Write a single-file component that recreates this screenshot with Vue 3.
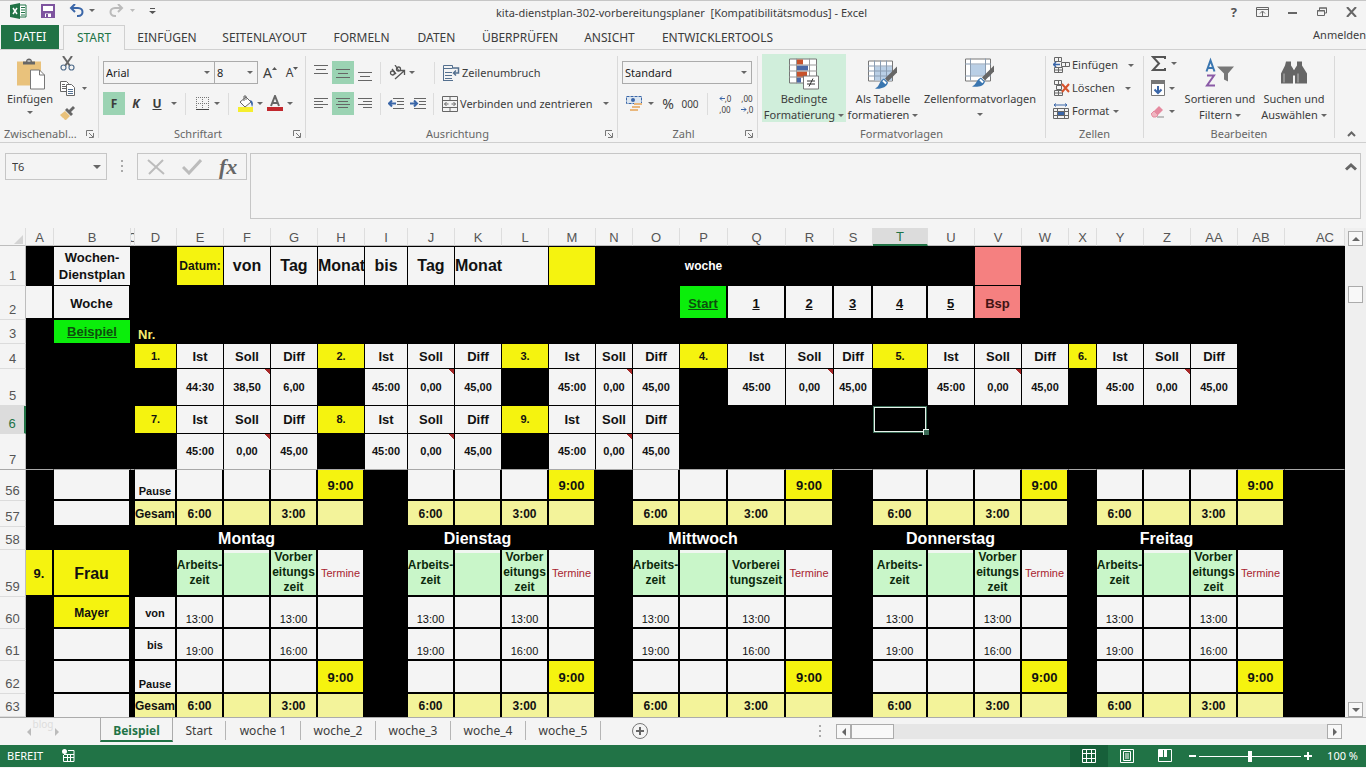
<script setup>
import { ref } from 'vue'

const ribbonTabs = [
  { t: 'EINFÜGEN', w: 84 }, { t: 'SEITENLAYOUT', w: 111 }, { t: 'FORMELN', w: 83 }, { t: 'DATEN', w: 67 },
  { t: 'ÜBERPRÜFEN', w: 100 }, { t: 'ANSICHT', w: 79 }, { t: 'ENTWICKLERTOOLS', w: 137 }
]
const sheets = ['Start', 'woche 1', 'woche_2', 'woche_3', 'woche_4', 'woche_5']
const zoom = ref(50)

const cols = [
  ['A', 28], ['B', 77], ['C', 4], ['D', 42], ['E', 47], ['F', 47], ['G', 47], ['H', 47], ['I', 43],
  ['J', 47], ['K', 47], ['L', 47], ['M', 47], ['N', 37], ['O', 47], ['P', 48], ['Q', 58], ['R', 48],
  ['S', 39], ['T', 55], ['U', 47], ['V', 47], ['W', 47], ['X', 28], ['Y', 47], ['Z', 47], ['AA', 47],
  ['AB', 47], ['AC', 0]
]
const names = cols.map(c => c[0])
const days = [
  ['E', 'F', 'G', 'H'], ['J', 'K', 'L', 'M'], ['O', 'P', 'Q', 'R'], ['T', 'U', 'V', 'W'], ['Y', 'Z', 'AA', 'AB']
]
const dayNames = ['Montag', 'Dienstag', 'Mittwoch', 'Donnerstag', 'Freitag']

function c(t, k) { return { t, k } }

function summaryHead(first, count) {
  const out = {}
  for (let i = 0; i < count; i++) {
    const at = 3 + i * 4
    out[names[at]] = c(first + i + '.', 'yellow s11')
    out[names[at + 1]] = c('Ist', 'white s13')
    out[names[at + 2]] = c('Soll', 'white s13')
    out[names[at + 3]] = c('Diff', 'white s13')
  }
  return out
}
function summaryValues(list) {
  const out = {}
  list.forEach((v, i) => {
    const at = 3 + i * 4
    out[names[at + 1]] = c(v[0], 'white s11')
    out[names[at + 2]] = c(v[1], 'white s11 note')
    out[names[at + 3]] = c(v[2], 'white s11')
  })
  return out
}
function dayCells(base, vals) {
  const out = { ...base }
  days.forEach(d => d.forEach((n, i) => { if (vals[i]) out[n] = vals[i] }))
  return out
}
const e = c('', 'white')
const std = ['45:00', '0,00', '45,00']
const pause = () => dayCells({ B: e, D: c('Pause', 'white s11 low') }, [e, e, e, c('9:00', 'yellow s13')])
const total = () => dayCells({ B: e, D: c('Gesamt', 'pale s12 left') },
  [c('6:00', 'pale s12'), c('', 'pale'), c('3:00', 'pale s12'), c('', 'pale')])

const dayTitles = {}
days.forEach((d, i) => { dayTitles[d[1]] = c(dayNames[i], 'dark s16') })
const headings = dayCells({ A: c('9.', 'yellow s13'), B: c('Frau', 'yellow s16') }, [
  c('Arbeits-\nzeit', 'mint s12'), c('', 'mint lit'), c('Vorber\neitungs\nzeit', 'mint s12'), c('Termine', 'white s11 red')
])
headings.Q = c('Vorberei\ntungszeit', 'mint s12')

const rows = [
  { n: 1, h: 40, k: 'thin first', cells: {
    B: c('Wochen-\nDienstplan', 'white s13 tall'), E: c('Datum:', 'yellow s12'), F: c('von', 'white s16'), G: c('Tag', 'white s16'),
    H: c('Monat', 'white s16 left'), I: c('bis', 'white s16'), J: c('Tag', 'white s16'),
    K: { t: 'Monat', k: 'white s16 left', span: 2 }, M: c('', 'yellow'), P: c('woche', 'dark s12'), V: c('', 'pink') } },
  { n: 2, h: 34, k: 'thick', cells: {
    A: e, B: c('Woche', 'white s13'), P: { t: 'Start', k: 'green s13', link: 1 },
    Q: { t: '1', k: 'white s13', link: 1 }, R: { t: '2', k: 'white s13', link: 1 }, S: { t: '3', k: 'white s13', link: 1 },
    T: { t: '4', k: 'white s13', link: 1 }, U: { t: '5', k: 'white s13', link: 1 }, V: c('Bsp', 'pink s13') } },
  { n: 3, h: 24, k: 'thin', cells: { B: { t: 'Beispiel', k: 'green s13', link: 1 }, D: c('Nr.', 'gold s13 left low') } },
  { n: 4, h: 25, k: 'thin', cells: summaryHead(1, 6) },
  { n: 5, h: 37, k: 'thin', cells: summaryValues([['44:30', '38,50', '6,00'], std, std, std, std, std]) },
  { n: 6, h: 28, k: 'thin current', cells: { ...summaryHead(7, 3), T: c('', 'selected') } },
  { n: 7, h: 36, k: 'thin frozen', cells: summaryValues([std, std, std]) },
  { n: 56, h: 31, k: 'thick', cells: pause() },
  { n: 57, h: 26, k: 'thick', cells: total() },
  { n: 58, h: 23, k: 'thick', cells: dayTitles },
  { n: 59, h: 47, k: 'thick', cells: headings },
  { n: 60, h: 32, k: 'thick', cells: dayCells({ B: c('Mayer', 'yellow s12'), D: c('von', 'white s11') },
    [c('13:00', 'white s11 low plain'), e, c('13:00', 'white s11 low plain'), e]) },
  { n: 61, h: 32, k: 'thick', cells: dayCells({ B: e, D: c('bis', 'white s11') },
    [c('19:00', 'white s11 low plain'), e, c('16:00', 'white s11 low plain'), e]) },
  { n: 62, h: 33, k: 'thick', cells: pause() },
  { n: 63, h: 23, k: 'thick last', cells: total() }
]
function cellList(row) {
  const out = []
  for (let i = 0; i < names.length; i++) {
    const cell = row.cells[names[i]] || { t: '', k: '' }
    out.push({ id: names[i], ...cell })
    if (cell.span) i += cell.span - 1
  }
  return out
}
</script>

<template>
  <div class="app">
    <header class="titlebar">
      <div class="quick">
        <svg width="17" height="16" viewBox="0 0 17 16"><path d="M9 2h7v12H9z" fill="#fff" stroke="#217346" /><path d="M11 4.500h4M11 7h4M11 9.500h4M11 12h4" stroke="#217346" /><path d="M0 2l10-2v16L0 14z" fill="#217346" /><path d="M3 5l4 6M7 5l-4 6" stroke="#fff" stroke-width="1.500" /></svg>
        <button class="ic" aria-label="Speichern"><svg width="14" height="14" viewBox="0 0 14 14"><path d="M1 1h12v12H1z" fill="#fff" stroke="#7e549f" stroke-width="2" /><path d="M1 7h12v6H1z" fill="#7e549f" /><path d="M4 9.500h6V13H4z" fill="#fff" /><path d="M5 10h2v3H5z" fill="#7e549f" /></svg></button>
        <button class="ic" aria-label="Rückgängig"><svg width="26" height="14" viewBox="0 0 26 14"><path d="M6 0L2 4l4 4M2 4h7c6 0 6 8 0 8H8" fill="none" stroke="#3a66a8" stroke-width="2" /><path d="M20 5h6l-3 3z" fill="#666" /></svg></button>
        <button class="ic" aria-label="Wiederholen"><svg width="26" height="14" viewBox="0 0 26 14"><path d="M9 0l4 4-4 4M13 4H6C0 4 0 12 6 12h1" fill="none" stroke="#bbb" stroke-width="2" /><path d="M21 5h5l-2.500 3z" fill="#bbb" /></svg></button>
        <button class="ic" aria-label="Symbolleiste anpassen"><svg width="7" height="8" viewBox="0 0 7 8"><path d="M1 1.500h5" stroke="#555" /><path d="M0 4h7L3.500 7z" fill="#555" /></svg></button>
      </div>
      <h1 class="title">kita-dienstplan-302-vorbereitungsplaner&nbsp; [Kompatibilitätsmodus] - Excel</h1>
      <div class="window">
        <button class="ic help" aria-label="Hilfe">?</button>
        <button class="ic" aria-label="Menüband-Anzeigeoptionen"><svg width="13" height="10" viewBox="0 0 13 10"><path d="M.5.5h12v9H.5zM.5 2.500h12" fill="none" stroke="#666" /><path d="M6.500 9V4.500M4 6.500l2.500-2.500L9 6.500" fill="none" stroke="#666" /></svg></button>
        <button class="ic" aria-label="Minimieren"><svg width="10" height="10" viewBox="0 0 10 10"><path d="M0 6h9" stroke="#666" stroke-width="2" /></svg></button>
        <button class="ic" aria-label="Verkleinern"><svg width="10" height="10" viewBox="0 0 10 10"><path d="M2.500 3V1h7v5H8M.5 3.500h7v5h-7z" fill="none" stroke="#666" /><path d="M2 1h8M0 4h8" stroke="#666" /></svg></button>
        <button class="ic" aria-label="Schließen"><svg width="11" height="10" viewBox="0 0 11 10"><path d="M1 0l9 10M10 0L1 10" stroke="#666" stroke-width="2" /></svg></button>
      </div>
    </header>

    <nav class="tabs">
      <button class="file">DATEI</button>
      <button class="tab on">START</button>
      <button v-for="t in ribbonTabs" :key="t.t" class="tab" :style="{ width: t.w + 'px' }">{{ t.t }}</button>
      <a href="#" class="login">Anmelden</a>
    </nav>

    <section class="ribbon">
      <div class="group g1">
        <div class="body">
          <button class="big paste">
            <svg width="29" height="31" viewBox="0 0 29 31"><path d="M1 3h24v24H1z" fill="#e9c27c" /><path d="M7 6V3h3c0-4 6-4 6 0h3v3z" fill="#666" /><path d="M11.500 2.500h3" stroke="#fff" /><path d="M14.500 11.500h9l5 5v14h-14z" fill="#fff" stroke="#777" /><path d="M23.500 11.500v5h5" fill="none" stroke="#777" /></svg>
            <span>Einfügen</span><i class="car"></i>
          </button>
          <div class="stack clip">
            <button class="ic" aria-label="Ausschneiden"><svg width="15" height="15" viewBox="0 0 15 15"><path d="M3 0l7 10M12 0L5 10" stroke="#666" stroke-width="2" /><circle cx="3.500" cy="11.500" r="2.500" fill="none" stroke="#54708f" stroke-width="1.200" /><circle cx="11.500" cy="11.500" r="2.500" fill="none" stroke="#54708f" stroke-width="1.200" /></svg></button>
            <button class="ic" aria-label="Kopieren"><svg width="27" height="15" viewBox="0 0 27 15"><path d="M.5.5h6l2 2v8h-8zM2 3.500h3M2 5.500h4M2 7.500h4" fill="#fff" stroke="#666" /><path d="M6.500 3.500h5l3 3v8h-8z" fill="#fff" stroke="#666" /><path d="M8 8.500h5M8 10.500h5M8 12.500h5" stroke="#54708f" /><path d="M22 6h5l-2.500 3z" fill="#666" /></svg></button>
            <button class="ic" aria-label="Format übertragen"><svg width="16" height="14" viewBox="0 0 16 14"><path d="M0 9l5-4 5 5-4 4c-2 0-2-2-3-2z" fill="#e9c27c" /><path d="M5 4l6 6 2-2-2-2 4-4-2-2-4 4-2-2z" fill="#666" /></svg></button>
          </div>
        </div>
        <div class="cap"><span>Zwischenabl...</span><svg class="dlg" width="8" height="8" viewBox="0 0 8 8"><path d="M.5 6V.5H7M3 3l4 4M7.500 3v4.500H3" fill="none" stroke="#777" /></svg></div>
      </div>

      <div class="group g2">
        <div class="lines">
          <div class="line">
            <label class="combo arial"><select aria-label="Schriftart"><option>Arial</option></select></label>
            <label class="combo size"><select aria-label="Schriftgrad"><option>8</option></select></label>
            <button class="ic w24" aria-label="Schrift vergrößern"><b class="grow">A</b><svg width="5" height="12" viewBox="0 0 5 12"><path d="M0 3l2.500-3L5 3z" fill="#555" /></svg></button>
            <button class="ic w20" aria-label="Schrift verkleinern"><b class="shrink">A</b><svg width="5" height="12" viewBox="0 0 5 12"><path d="M0 0h5L2.500 3z" fill="#555" /></svg></button>
          </div>
          <div class="line">
            <button class="ic w22 on bold">F</button>
            <button class="ic w22 bold ital">K</button>
            <button class="ic w20 bold und">U</button><i class="car"></i>
            <i class="vs"></i>
            <button class="ic w24" aria-label="Rahmen"><svg width="13" height="13" viewBox="0 0 13 13"><path d="M.5 0v12M6.500 0v12M12.500 0v12M0 .5h13M0 6.500h13" stroke="#777" stroke-dasharray="1 1" /><path d="M0 12.500h13" stroke="#444" /></svg></button><i class="car"></i>
            <i class="vs"></i>
            <button class="ic w24" aria-label="Füllfarbe"><svg width="17" height="17" viewBox="0 0 17 17"><path d="M1 12h15v5H1z" fill="#f5ee2e" /><path d="M3 7l6-5 5 5-6 5z" fill="#fff" stroke="#666" /><path d="M7 6V1h2v4" fill="none" stroke="#666" /><path d="M13 5c4 1 3 5 2 7z" fill="#3a66a8" /></svg></button><i class="car"></i>
            <button class="ic w24" aria-label="Schriftfarbe"><svg width="16" height="17" viewBox="0 0 16 17"><path d="M4 11l4-10 4 10M5.500 8h5" fill="none" stroke="#666" stroke-width="2" /><path d="M0 12h16v4H0z" fill="#c1272d" /></svg></button><i class="car"></i>
          </div>
        </div>
        <div class="cap"><span>Schriftart</span><svg class="dlg" width="8" height="8" viewBox="0 0 8 8"><path d="M.5 6V.5H7M3 3l4 4M7.500 3v4.500H3" fill="none" stroke="#777" /></svg></div>
      </div>

      <div class="group g3">
        <div class="lines">
          <div class="line">
            <button class="ic w22" aria-label="Oben ausrichten"><svg width="14" height="16" viewBox="0 0 14 16"><path d="M0 .5h14M2 4.500h10M0 8.500h14" stroke="#666" /></svg></button>
            <button class="ic w22 on" aria-label="Zentriert ausrichten"><svg width="14" height="16" viewBox="0 0 14 16"><path d="M0 4.500h14M2 8.500h10M0 12.500h14" stroke="#666" /></svg></button>
            <button class="ic w22" aria-label="Unten ausrichten"><svg width="14" height="16" viewBox="0 0 14 16"><path d="M0 7.500h14M2 11.500h10M0 15.500h14" stroke="#666" /></svg></button>
            <i class="vs"></i>
            <button class="ic w24" aria-label="Ausrichtung"><svg width="17" height="15" viewBox="0 0 17 15"><circle cx="3.500" cy="8" r="2" fill="none" stroke="#555" stroke-width="1.300" /><path d="M3 4l4 5M6 0l4 6" fill="none" stroke="#555" stroke-width="1.300" /><circle cx="9.500" cy="4" r="2" fill="none" stroke="#555" stroke-width="1.300" /><path d="M6 14l9-8M11 5.500h4.500V10" fill="none" stroke="#555" stroke-width="1.300" /></svg></button><i class="car"></i>
            <i class="vs wide"></i>
            <button class="txt"><svg width="17" height="16" viewBox="0 0 17 16"><path d="M.5.5h9v3h-9zM.5 3v12M2 7.500h7M2 10.500h7M2 13.500h7M0 15.500h10" fill="none" stroke="#54708f" /><path d="M10 3h5.500v5H11M13 5.500L10.500 8l2.500 2.500" fill="none" stroke="#54708f" stroke-width="1.500" /></svg>Zeilenumbruch</button>
          </div>
          <div class="line">
            <button class="ic w22" aria-label="Linksbündig"><svg width="14" height="13" viewBox="0 0 14 13"><path d="M0 1.500h14M0 4.500h9M0 7.500h14M0 10.500h9" stroke="#666" /></svg></button>
            <button class="ic w22 on" aria-label="Zentriert"><svg width="14" height="13" viewBox="0 0 14 13"><path d="M0 1.500h14M2 4.500h10M0 7.500h14M2 10.500h10" stroke="#666" /></svg></button>
            <button class="ic w22" aria-label="Rechtsbündig"><svg width="14" height="13" viewBox="0 0 14 13"><path d="M0 1.500h14M5 4.500h9M0 7.500h14M5 10.500h9" stroke="#666" /></svg></button>
            <i class="vs"></i>
            <button class="ic w22" aria-label="Einzug verkleinern"><svg width="16" height="12" viewBox="0 0 16 12"><path d="M5 .5h11M9 3.500h7M9 6.500h7M5 10.500h11" stroke="#666" /><path d="M1 5.500h7M4 2.500l-3 3 3 3" fill="none" stroke="#3a66a8" stroke-width="2" /></svg></button>
            <button class="ic w22" aria-label="Einzug vergrößern"><svg width="16" height="12" viewBox="0 0 16 12"><path d="M4 .5h12M9 3.500h7M9 6.500h7M4 10.500h12" stroke="#666" /><path d="M0 5.500h7M4 2.500l3 3-3 3" fill="none" stroke="#3a66a8" stroke-width="2" /></svg></button>
            <i class="vs"></i>
            <button class="txt"><svg width="16" height="16" viewBox="0 0 16 16"><path d="M.5.500h15v15H.5zM.5 4.500h15M.5 11.500h15M8 .5v4M8 11.500v4M2.500 8h4M13.500 8h-4M4.500 6l-2 2 2 2M11.500 6l2 2-2 2" fill="none" stroke="#666" /></svg>Verbinden und zentrieren</button><i class="car end"></i>
          </div>
        </div>
        <div class="cap"><span>Ausrichtung</span><svg class="dlg" width="8" height="8" viewBox="0 0 8 8"><path d="M.5 6V.5H7M3 3l4 4M7.500 3v4.500H3" fill="none" stroke="#777" /></svg></div>
      </div>

      <div class="group g4">
        <div class="lines">
          <div class="line"><label class="combo std"><select aria-label="Zahlenformat"><option>Standard</option></select></label></div>
          <div class="line">
            <button class="ic w24" aria-label="Buchhaltungszahlenformat"><svg width="17" height="16" viewBox="0 0 17 16"><path d="M.5.5h15v7H.5z" fill="#dce6f0" stroke="#3a66a8" stroke-dasharray="3 1" /><circle cx="7" cy="4" r="2" fill="#3a66a8" /><path d="M8 8h8M6 11h8M4 14h8" stroke="#e9b77c" stroke-width="2" /></svg></button><i class="car"></i>
            <button class="ic w22 pct">%</button>
            <button class="ic w22 zero">000</button>
            <i class="vs"></i>
            <button class="ic w22 deci" aria-label="Dezimalstelle hinzufügen"><span><svg width="6" height="5" viewBox="0 0 6 5"><path d="M1 2.500h5M3 .5l-2 2 2 2" fill="none" stroke="#3a66a8" /></svg>,0</span><span>,00</span></button>
            <button class="ic w22 deci" aria-label="Dezimalstelle entfernen"><span>,00</span><span><svg width="6" height="5" viewBox="0 0 6 5"><path d="M0 2.500h5M3 .5l2 2-2 2" fill="none" stroke="#3a66a8" /></svg>,0</span></button>
          </div>
        </div>
        <div class="cap"><span>Zahl</span><svg class="dlg" width="8" height="8" viewBox="0 0 8 8"><path d="M.5 6V.5H7M3 3l4 4M7.500 3v4.500H3" fill="none" stroke="#777" /></svg></div>
      </div>

      <div class="group g5">
        <div class="body">
          <button class="big lit84">
            <svg width="30" height="31" viewBox="0 0 30 31"><path d="M.5.5h27v24H.5z" fill="#fff" stroke="#777" /><path d="M8 1h6v5H8zM8 13h10v6H8z" fill="#c8532c" /><path d="M8 7h11v5H8zM8 19h4v5H8z" fill="#4a68a6" /><path d="M7.500 0v25M20.500 0v25M0 6.500h28M0 12.500h28M0 18.500h28" stroke="#999" /><path d="M14.500 17.500h15v13h-15z" fill="#fff" stroke="#777" /><path d="M18 22.500h8M18 25.500h8M24 20l-4 8" stroke="#333" /></svg>
            <span>Bedingte</span><span>Formatierung<i class="car"></i></span>
          </button>
          <button class="big table">
            <svg width="30" height="31" viewBox="0 0 30 31"><path d="M.5 2.500h24v20H.5z" fill="#fff" stroke="#777" /><path d="M7 8h17v14H7z" fill="#b9cfe6" /><path d="M6.500 2v20M12.500 2v20M18.500 2v20M0 7.500h24M0 12.500h24M0 17.500h24" stroke="#8a9db3" /><path d="M29 8v6l-9 9-3-3z" fill="#666" /><path d="M16 20l4 4c-1 5-8 7-13 6 5-2 4-8 9-10z" fill="#3a76b0" /><path d="M15 22l3 3" stroke="#fff" stroke-width="2" /></svg>
            <span>Als Tabelle</span><span>formatieren<i class="car"></i></span>
          </button>
          <button class="big styles">
            <svg width="30" height="31" viewBox="0 0 30 31"><path d="M.5.500h25v22H.5z" fill="#fff" stroke="#777" /><path d="M6 6h14v11H6z" fill="#b9cfe6" /><path d="M5.500 0v22M20.500 0v22M0 5.500h26M0 17.500h26" stroke="#8a9db3" /><path d="M29 7v6l-9 9-3-3z" fill="#666" /><path d="M16 19l4 4c-1 5-8 6-13 5 5-2 4-7 9-9z" fill="#3a76b0" /><path d="M15 21l3 3" stroke="#fff" stroke-width="2" /></svg>
            <span>Zellenformatvorlagen</span><i class="car"></i>
          </button>
        </div>
        <div class="cap"><span>Formatvorlagen</span></div>
      </div>

      <div class="group g6">
        <div class="stack cells">
          <button class="txt"><svg width="17" height="16" viewBox="0 0 17 16"><path d="M1.500.5h7v4h-7zM1.500 10.500h8v5h-8zM5.500.5v4M5.500 10.500v5M1.500 13h8M8.500 5.500h8v4h-8zM12.500 5.500v4" fill="none" stroke="#666" /><path d="M0 7.500h7M3 5L.5 7.500 3 10" fill="none" stroke="#3a66a8" stroke-width="1.500" /></svg>Einfügen<i class="car far"></i></button>
          <button class="txt"><svg width="17" height="16" viewBox="0 0 17 16"><path d="M1.500.5h7v4h-7zM1.500 10.500h8v5h-8zM5.500.5v4M5.500 10.500v5M1.500 13h8M3.500 5.500h5v4h-5z" fill="none" stroke="#666" /><path d="M9 4l7 8M16 4l-7 8" stroke="#d8532c" stroke-width="2" /></svg>Löschen<i class="car far"></i></button>
          <button class="txt"><svg width="17" height="16" viewBox="0 0 17 16"><path d="M1 2h13M3 .5L1 2l2 1.500M12 .5L14 2l-2 1.500" fill="none" stroke="#3a66a8" /><path d="M.5 5.500h15v10H.5zM4.500 5.500v10M11.500 5.500v10M.5 8.500h15M.5 12.500h15" fill="none" stroke="#666" /><path d="M5 9h6v3H5z" fill="#3a66a8" /></svg>Format<i class="car"></i></button>
        </div>
        <div class="cap"><span>Zellen</span></div>
      </div>

      <div class="group g7">
        <div class="body">
          <div class="stack edit">
            <button class="ic" aria-label="Summe"><svg width="16" height="15" viewBox="0 0 16 15"><path d="M14 3V1H2l6 6.500L2 14h12v-2" fill="none" stroke="#555" stroke-width="2" /></svg><i class="car"></i></button>
            <button class="ic" aria-label="Füllbereich"><svg width="14" height="16" viewBox="0 0 14 16"><path d="M.5.5h13v15H.5z" fill="#fff" stroke="#777" /><path d="M0 0h14v4H0z" fill="#777" /><path d="M7 6v7M3.500 9.500L7 13l3.500-3.500" fill="none" stroke="#3a66a8" stroke-width="2" /></svg><i class="car"></i></button>
            <button class="ic" aria-label="Löschen"><svg width="14" height="13" viewBox="0 0 14 13"><path d="M3 6l5-5 4 4-5 5z" fill="#e58a9f" /><path d="M3 6L0 9l2 3h3l2-2z" fill="#f0b5c0" stroke="#e58a9f" /><path d="M6 12h7" stroke="#888" /></svg><i class="car"></i></button>
          </div>
          <button class="big sort">
            <svg width="30" height="31" viewBox="0 0 30 31"><path d="M1.500 13L5.500 2l4 11M3 9.500h5" fill="none" stroke="#3a76b0" stroke-width="2" /><path d="M2 17h7L2 27h8" fill="none" stroke="#8a5aa6" stroke-width="2" /><path d="M12 8h17l-6 7v8l-4-2v-6z" fill="#777" /></svg>
            <span>Sortieren und</span><span>Filtern<i class="car"></i></span>
          </button>
          <button class="big find">
            <svg width="28" height="31" viewBox="0 0 28 31"><path d="M6 3h5v4l2 3v15H1V15L5 7zM17 3h5v4l5 8v10H15V10l2-3z" fill="#666" /><path d="M12 11h4v6h-4z" fill="#666" /><path d="M4 15v9M18 15v9" stroke="#bbb" /></svg>
            <span>Suchen und</span><span>Auswählen<i class="car"></i></span>
          </button>
        </div>
        <div class="cap"><span>Bearbeiten</span></div>
      </div>
      <button class="ic collapse" aria-label="Menüband reduzieren"><svg width="9" height="6" viewBox="0 0 9 6"><path d="M1 5l3.500-3.500L8 5" fill="none" stroke="#666" stroke-width="2" /></svg></button>
    </section>

    <section class="formula">
      <label class="namebox"><input aria-label="Namenfeld" value="T6"><i class="car"></i></label>
      <i class="dots"></i>
      <div class="fx">
        <button class="ic" aria-label="Abbrechen"><svg width="18" height="16" viewBox="0 0 18 16"><path d="M1 1l16 14M16 1L2 15" stroke="#bcbcbc" stroke-width="2" /></svg></button>
        <button class="ic" aria-label="Eingeben"><svg width="20" height="16" viewBox="0 0 20 16"><path d="M1 8l6 6L19 1" fill="none" stroke="#bcbcbc" stroke-width="3" /></svg></button>
        <button class="ic fn" aria-label="Funktion einfügen"><i>fx</i></button>
      </div>
      <div class="entry"><textarea aria-label="Bearbeitungsleiste"></textarea>
        <button class="ic" aria-label="Bearbeitungsleiste reduzieren"><svg width="12" height="9" viewBox="0 0 12 9"><path d="M1 7.500L6 3l5 4.500" fill="none" stroke="#666" stroke-width="3" /></svg></button>
      </div>
    </section>

    <main class="sheet">
      <div class="grid">
        <table>
          <colgroup><col class="rh"><col v-for="k in cols" :key="k[0]" :style="k[1] ? { width: k[1] + 'px' } : null"></colgroup>
          <thead>
            <tr><th class="corner"><svg width="9" height="9" viewBox="0 0 9 9"><path d="M9 0v9H0z" fill="#d4d4d4" /></svg></th>
              <th v-for="k in cols" :key="k[0]" scope="col" :class="{ cur: k[0] === 'T', cut: k[0] === 'AC' }"><div class="v">{{ k[0] }}</div></th></tr>
          </thead>
          <tbody>
            <tr v-for="r in rows" :key="r.n" :class="r.k" :style="{ height: r.h + 'px' }">
              <th scope="row">{{ r.n }}</th>
              <td v-for="d in cellList(r)" :key="d.id" :class="d.k" :colspan="d.span"><a v-if="d.link" href="#" class="v">{{ d.t }}</a><div v-else-if="d.t" class="v">{{ d.t }}</div></td>
            </tr>
          </tbody>
        </table>
      </div>
      <div class="vscroll">
        <button class="sb" aria-label="Nach oben"><i class="tri up"></i></button>
        <div class="thumb"></div>
        <button class="sb" aria-label="Nach unten"><i class="tri down"></i></button>
      </div>
    </main>

    <nav class="sheets">
      <div class="arrows"><i class="tri left"></i><span>blog</span><i class="tri right"></i></div>
      <button class="stab on">Beispiel</button>
      <button v-for="(s, i) in sheets" :key="s" class="stab" :class="{ slim: i === 0 }">{{ s }}</button>
      <button class="ic plus" aria-label="Neues Blatt"><svg width="16" height="16" viewBox="0 0 16 16"><circle cx="8" cy="8" r="7.500" fill="none" stroke="#777" /><path d="M8 4v8M4 8h8" stroke="#666" stroke-width="2" /></svg></button>
      <i class="dots"></i>
      <div class="hscroll">
        <button class="sb" aria-label="Nach links"><i class="tri left"></i></button>
        <div class="hthumb"></div><div class="track"></div>
        <button class="sb" aria-label="Nach rechts"><i class="tri right"></i></button>
      </div>
    </nav>

    <footer class="status">
      <span class="ready">BEREIT</span>
      <svg width="14" height="14" viewBox="0 0 14 14"><circle cx="3.500" cy="2.500" r="2.500" fill="#fff" /><path d="M7 1.500h6v11H2.500V6M3 5.500h10M3 8.500h10M6.500 5v7M9.500 5v7" fill="none" stroke="#fff" /></svg>
      <div class="views">
        <button class="ic on" aria-label="Normal"><svg width="14" height="14" viewBox="0 0 14 14"><path d="M.5.5h13v13H.5zM4.500.5v13M9.500.5v13M.5 4.500h13M.5 9.500h13" fill="none" stroke="#fff" /></svg></button>
        <button class="ic" aria-label="Seitenlayout"><svg width="14" height="14" viewBox="0 0 14 14"><path d="M.5.5h13v13H.5zM3.500 2.500h7v9h-7zM5 5h4M5 7h4M5 9h4" fill="none" stroke="#fff" /></svg></button>
        <button class="ic" aria-label="Umbruchvorschau"><svg width="14" height="14" viewBox="0 0 14 14"><path d="M.5.500h13v12H.5z" fill="none" stroke="#fff" /><path d="M1 1h4v7H1zM6 1h3v7H6z" fill="#fff" /></svg></button>
      </div>
      <button class="ic" aria-label="Verkleinern"><svg width="7" height="10" viewBox="0 0 7 10"><path d="M0 5h7" stroke="#fff" stroke-width="2" /></svg></button>
      <input v-model="zoom" type="range" min="0" max="100" aria-label="Zoom">
      <button class="ic" aria-label="Vergrößern"><svg width="8" height="10" viewBox="0 0 8 10"><path d="M0 5h8M4 1v8" stroke="#fff" stroke-width="2" /></svg></button>
      <span class="percent">100 %</span>
    </footer>
  </div>
</template>

<style>
html, body { margin: 0; background: #f4f4f4; }
</style>

<style scoped>
* { box-sizing: border-box; }
.app { height: 100vh; min-height: 600px; display: flex; flex-direction: column; overflow: hidden; background: #f4f4f4; color: #3c3c3c; font: 11px/16px "Noto Sans", "Open Sans", sans-serif; border-top: 1px solid #c6c6c6; }
button, input, select, textarea { font: inherit; color: inherit; background: none; border: 0; padding: 0; margin: 0; border-radius: 0; }
svg { display: block; flex: none; }
.ic { display: flex; align-items: center; justify-content: center; flex: none; }
.car { flex: none; display: block; width: 0; border: 3px solid transparent; border-top-color: #666; border-bottom: 0; }

.titlebar { height: 24px; flex: none; display: flex; align-items: center; }
.quick { width: 200px; flex: none; display: flex; align-items: center; gap: 14px; padding-left: 10px; margin-top: -4px; }
.title { flex: 1; margin: 0; text-align: center; font-size: 11px; font-weight: 400; white-space: nowrap; }
.window { width: 203px; flex: none; display: flex; align-items: center; justify-content: flex-end; gap: 19px; padding-right: 9px; margin-top: -3px; }
.help { font-weight: 700; font-size: 13px; color: #555; }

.tabs { height: 25px; flex: none; display: flex; border-bottom: 1px solid #d0d0d0; font-size: 12px; }
.file { width: 58px; margin: 0 4px 0 1px; background: #217346; color: #fff; }
.tab { flex: none; height: 25px; white-space: nowrap; text-align: center; }
.tab.on { width: 62px; height: 25px; background: #f4f4f4; border: 1px solid #d0d0d0; border-bottom: 0; color: #217346; }
.login { margin-left: auto; padding-top: 2px; color: inherit; text-decoration: none; font-size: 11px; }

.ribbon { height: 93px; flex: none; display: flex; border-bottom: 1px solid #cfcfcf; }
.group { flex: none; position: relative; display: flex; flex-direction: column; padding-top: 4px; }
.group::after { content: ""; position: absolute; right: 0; top: 6px; bottom: 4px; width: 1px; background: #d9d9d9; }
.body, .lines, .stack { height: 72px; }
.body { display: flex; }
.g1 { width: 99px; } .g2 { width: 207px; } .g3 { width: 312px; } .g4 { width: 140px; } .g5 { width: 288px; } .g6 { width: 98px; } .g7 { width: 191px; }
.cap { display: flex; align-items: center; height: 16px; color: #666; padding: 0 5px 0 4px; }
.cap span { flex: 1; text-align: center; white-space: nowrap; }
.g1 .cap span { text-align: left; }
.big { display: flex; flex-direction: column; align-items: center; height: 68px; padding-top: 3px; white-space: nowrap; }
.big svg { height: 34px; }
.big span { display: flex; align-items: center; gap: 3px; height: 16px; }
.paste { width: 48px; margin-left: 6px; }
.paste .car { margin-top: 4px; }
.stack { display: flex; flex-direction: column; justify-content: space-between; align-items: flex-start; }
.clip { padding: 2px 0 6px 6px; }
.lit84 { width: 84px; margin-left: 4px; background: #d0eedb; }
.table { width: 74px; }
.styles { width: 120px; }
.styles .car { margin-top: 6px; }
.sort { width: 76px; margin-left: 2px; }
.find { width: 72px; }
.cells { padding: 2px 0 6px 7px; }
.edit { width: 36px; padding: 2px 0 8px 7px; }
.edit .ic { gap: 4px; }
.txt { display: flex; align-items: center; gap: 2px; white-space: nowrap; height: 18px; }
.cells .txt .car { margin-left: 2px; }
.cells .txt .far { margin-left: 8px; }
.collapse { margin: 80px 0 0 12px; height: 8px; }

.lines { padding: 7px 0 0 4px; display: flex; flex-direction: column; gap: 8px; }
.line { display: flex; align-items: center; height: 23px; }
.combo { position: relative; display: block; height: 23px; border: 1px solid #ababab; flex: none; color: #222; }
.combo::after { content: ""; position: absolute; right: 4px; top: 9px; border: 3px solid transparent; border-top-color: #666; border-bottom: 0; }
.combo select { appearance: none; width: 100%; height: 21px; padding-left: 2px; }
.arial { width: 112px; } .size { width: 43px; border-left: 0; } .std { width: 130px; }
.w20 { width: 20px; } .w22 { width: 22px; } .w24 { width: 24px; }
.line .ic { height: 23px; }
.line .on { background: #9bd3b3; }
.bold { font-weight: 700; font-size: 12px; }
.ital { font-style: italic; }
.und { text-decoration: underline; }
.grow { font-size: 14px; font-weight: 400; } .shrink { font-size: 12px; font-weight: 400; }
.vs { width: 1px; height: 22px; background: #dcdcdc; margin: 0 6px; }
.g2 .vs { margin: 0 4px 0 8px; }
.g2 .line .und { margin-right: 4px; }
.g3 .vs { margin: 0 4px; }
.g3 .vs + .txt { margin-left: 4px; }
.wide.wide { margin: 0 4px 0 19px; }
.end { margin-left: 11px; }
.g4 .car { margin-left: 2px; }
.g4 .pct { margin-left: 3px; }
.pct { font-size: 14px; } .zero { font-size: 10px; }
.deci { flex-direction: column; font-size: 8px; line-height: 11px; }
.deci span { display: flex; align-items: center; height: 11px; }

.formula { height: 85px; flex: none; display: flex; align-items: flex-start; padding: 10px 5px 9px; }
.namebox { width: 102px; height: 27px; border: 1px solid #c6c6c6; display: flex; align-items: center; justify-content: space-between; padding: 0 5px 0 6px; flex: none; }
.namebox input { width: 78px; }
.namebox .car { border-width: 4px 4px 0; }
.dots { flex: none; width: 2px; height: 12px; margin: 7px 14px; background: repeating-linear-gradient(#aaa 0 2px, transparent 2px 5px); }
.fx { width: 110px; height: 27px; flex: none; border: 1px solid #c6c6c6; display: flex; align-items: center; justify-content: space-around; margin-right: 3px; }
.fn { font: italic 700 22px/24px "Liberation Serif", serif; color: #666; }
.entry { flex: 1; height: 66px; display: flex; border: 1px solid #c6c6c6; }
.entry textarea { flex: 1; resize: none; outline: 0; }
.entry .ic { height: 25px; width: 18px; }

.sheet { flex: 1; min-height: 0; display: flex; }
.grid { flex: 1; min-width: 0; overflow: hidden; background: #000; }
table { width: 100%; table-layout: fixed; border-collapse: separate; border-spacing: 0; font: 13px/15px "Liberation Sans", Arial, sans-serif; }
.rh { width: 26px; }
th, td { padding: 0; overflow: hidden; }
th { background: #f4f4f4; font-weight: 400; color: #555; }
thead th { height: 18px; padding-top: 1px; border-bottom: 1px solid #bdbdbd; border-right: 1px solid #ddd; }
.corner svg { margin: 4px 0 0 14px; }
thead .cur { background: #dcdcdc; color: #217346; padding-top: 0; border-bottom: 2px solid #217346; }
thead .cut .v { justify-content: flex-end; padding-right: 10px; }
tbody th { vertical-align: bottom; padding-bottom: 2px; border-bottom: 1px solid #dcdcdc; border-right: 1px solid #bdbdbd; }
.current th { background: #dcdcdc; color: #217346; border-right: 2px solid #217346; }
.v { display: flex; justify-content: center; text-align: center; white-space: pre; color: inherit; }
td { color: #111; font-weight: 700; vertical-align: middle; border: 0 solid #000; }
.thin td { border-width: 0 1px 1px 0; }
.thick td { border-width: 0 2px 2px 0; padding-top: 2px; }
.thick .mint { padding: 0; }
.first td { border-top-width: 1px; }
.frozen td, .frozen th { border-bottom-color: #a8a8a8; }
.last td { border-bottom-width: 0; }
.white { background: #f4f4f4; }
.yellow { background: #f5f30f; }
.pale { background: #f3f39a; }
.mint { background: #c9f6c9; color: #0c2a0c; }
.lit { background: linear-gradient(#f0f6f0 3px, #c9f6c9 3px); }
.pink { background: #f58080; color: #401414; }
.green { background: #0bee0b; color: #0d4f0d; }
.dark { color: #fff; overflow: visible; }
.gold { color: #f5ea70; overflow: visible; }
.gold.gold { padding: 0 0 1px 3px; }
.red { color: #a82430; font-weight: 400; }
.plain { font-weight: 400; }
.left .v { justify-content: flex-start; }
.low { vertical-align: bottom; }
.tall { line-height: 17px; }
.s11 { font-size: 11px; } .s12 { font-size: 12px; } .s13 { font-size: 13px; } .s16 { font-size: 16px; line-height: 18px; }
.note { background: linear-gradient(225deg, #a62828 4px, #f4f4f4 4px); }
.selected { box-shadow: inset 0 0 0 1px #3a6b55, inset 0 0 0 2px #e8f2ec; position: relative; overflow: visible; }
.selected::after { content: ""; position: absolute; right: -2px; bottom: -2px; width: 5px; height: 5px; background: #3a6b55; border: solid #e8f2ec; border-width: 1px 0 0 1px; }

.vscroll { width: 21px; flex: none; display: flex; flex-direction: column; align-items: center; background: #efefef; padding-top: 3px; }
.sb { width: 15px; height: 15px; flex: none; border: 1px solid #ababab; background: #f8f8f8; display: flex; align-items: center; justify-content: center; }
.thumb { width: 15px; height: 17px; border: 1px solid #ababab; background: #f8f8f8; margin: 40px 0 auto; }
.tri { display: block; flex: none; width: 0; border: 4px solid transparent; }
.up { border-bottom-color: #666; border-top: 0; }
.down { border-top-color: #666; border-bottom: 0; }
.left.tri { border-right-color: #666; border-left: 0; }
.right { border-left-color: #666; border-right: 0; }

.sheets { height: 28px; flex: none; display: flex; align-items: flex-start; border-top: 1px solid #ababab; font-size: 12px; padding-right: 24px; }
.arrows { width: 100px; flex: none; display: flex; justify-content: center; gap: 2px; align-items: center; height: 27px; padding-right: 14px; }
.arrows .tri.left { border-right-color: #bbb; } .arrows .right { border-left-color: #bbb; }
.arrows span { font-size: 10px; color: #ddd; height: 27px; line-height: 12px; }
.stab { width: 75px; height: 19px; margin-top: 3px; flex: none; border-right: 1px solid #b5b5b5; }
.stab.slim { width: 53px; }
.stab.on { width: 73px; height: 24px; margin: 0; padding-top: 3px; border: 1px solid #ababab; border-width: 0 1px 2px; border-bottom-color: #217346; color: #217346; font-weight: 700; }
.plus { margin: 5px 0 0 31px; }
.sheets .dots { margin-left: auto; margin-right: 15px; }
.hscroll { width: 506px; flex: none; display: flex; margin-top: 6px; }
.hthumb { width: 43px; height: 15px; border: 1px solid #ababab; background: #f8f8f8; }
.track { flex: 1; height: 15px; background: #e6e6e6; }

.status { height: 22px; flex: none; display: flex; align-items: center; background: #217346; color: #fff; padding: 0 8px 0 7px; margin-bottom: 1px; }
.ready { width: 54px; }
.views { margin-left: auto; display: flex; margin-right: 5px; }
.views .ic { width: 38px; height: 22px; }
.views .on { background: #17603a; }
.status input { appearance: none; width: 102px; height: 12px; margin: 0 3px; background: linear-gradient(#fff, #fff) center / 100% 1px no-repeat; }
.status input::-webkit-slider-thumb { appearance: none; width: 4px; height: 11px; background: #fff; }
.percent { width: 46px; text-align: right; }
</style>
